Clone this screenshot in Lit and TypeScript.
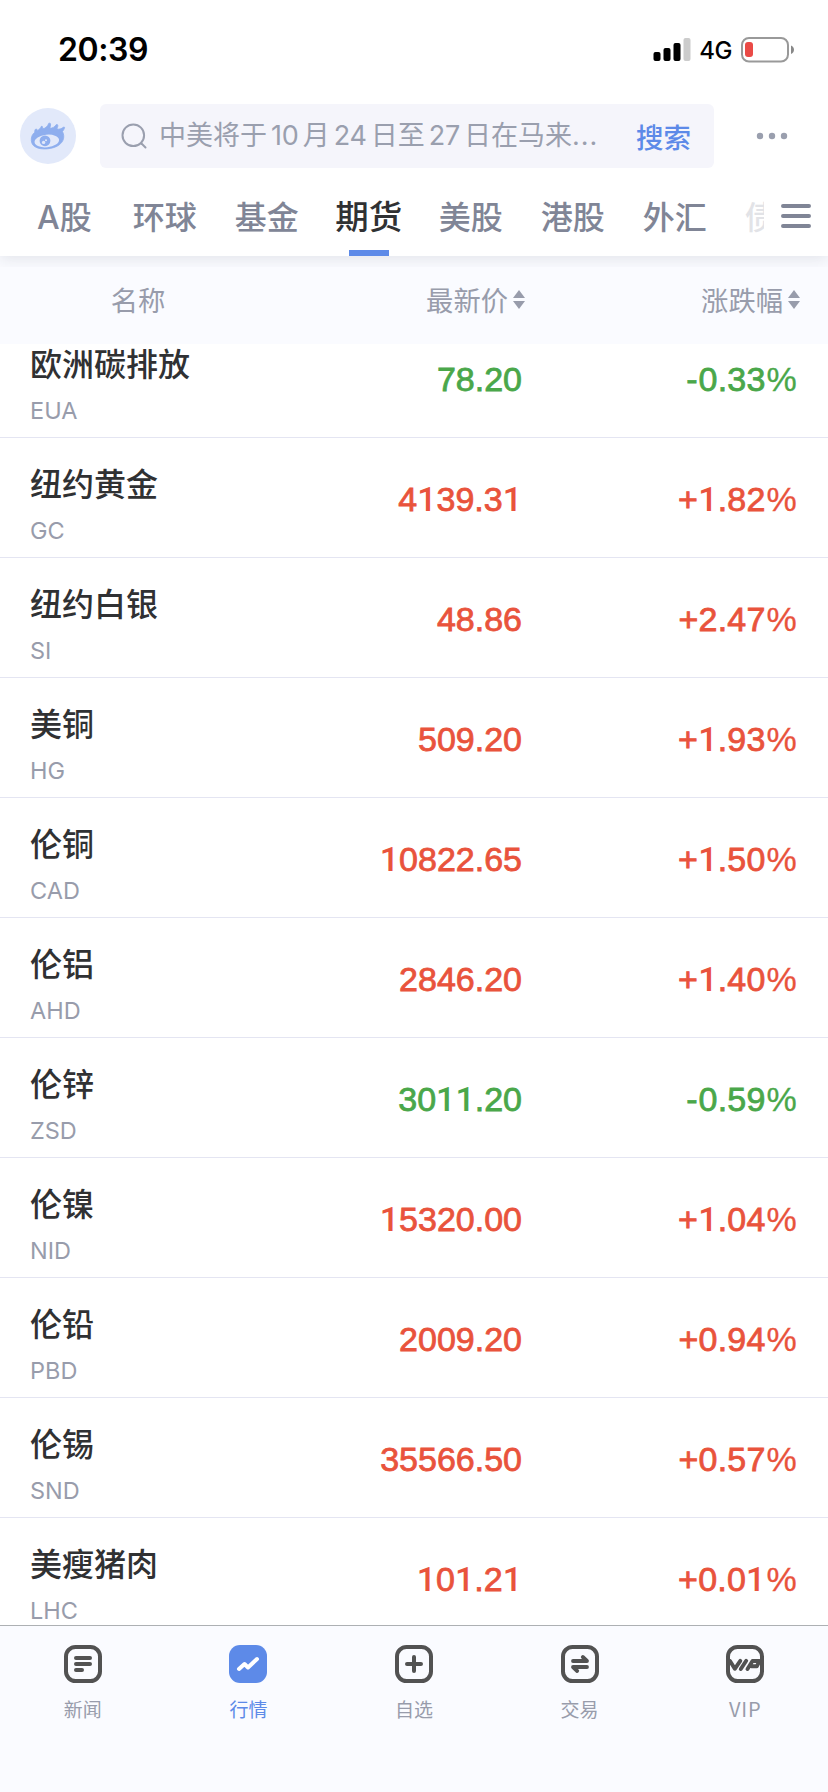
import { LitElement, html, css, svg } from "lit";
import { customElement } from "lit/decorators.js";
import { classMap } from "lit/directives/class-map.js";

type Quote = { name: string; code: string; price: string; change: string };

const QUOTES: Quote[] = [
  { name: "欧洲碳排放", code: "EUA", price: "78.20", change: "-0.33%" },
  { name: "纽约黄金", code: "GC", price: "4139.31", change: "+1.82%" },
  { name: "纽约白银", code: "SI", price: "48.86", change: "+2.47%" },
  { name: "美铜", code: "HG", price: "509.20", change: "+1.93%" },
  { name: "伦铜", code: "CAD", price: "10822.65", change: "+1.50%" },
  { name: "伦铝", code: "AHD", price: "2846.20", change: "+1.40%" },
  { name: "伦锌", code: "ZSD", price: "3011.20", change: "-0.59%" },
  { name: "伦镍", code: "NID", price: "15320.00", change: "+1.04%" },
  { name: "伦铅", code: "PBD", price: "2009.20", change: "+0.94%" },
  { name: "伦锡", code: "SND", price: "35566.50", change: "+0.57%" },
  { name: "美瘦猪肉", code: "LHC", price: "101.21", change: "+0.01%" },
];

const TABS = ["A股", "环球", "基金", "期货", "美股", "港股", "外汇", "债"];

const frame = svg`<rect x="2" y="2" width="34" height="34" rx="9.5" fill="none" stroke="#525252" stroke-width="4"/>`;

const NAV = [
  {
    label: "新闻",
    icon: svg`${frame}<path d="M12 13H26M12 19H26M12 25H18" stroke="#525252" stroke-width="4" stroke-linecap="round"/>`,
  },
  {
    label: "行情",
    active: true,
    icon: svg`<rect width="38" height="38" rx="11" fill="#5d8ae8"/><path d="M10 24L15.5 19L19 22.5L28 14" fill="none" stroke="#fff" stroke-width="4" stroke-linecap="round" stroke-linejoin="round"/>`,
  },
  {
    label: "自选",
    icon: svg`${frame}<path d="M12 19H26M19 12V26" stroke="#525252" stroke-width="4" stroke-linecap="round"/>`,
  },
  {
    label: "交易",
    icon: svg`${frame}<path d="M12 16H26L21.8 12M26 22H12L16.2 26" fill="none" stroke="#525252" stroke-width="3.8" stroke-linecap="round" stroke-linejoin="round"/>`,
  },
  {
    label: "VIP",
    icon: svg`${frame}<path d="M4 16L8.8 23.8L14.3 15.8M14.8 24L20.2 15.8M21.5 24L26.5 16H33.5L30.8 21.3H25.5" fill="none" stroke="#525252" stroke-width="3.9" stroke-linecap="round" stroke-linejoin="round"/>`,
  },
];

@customElement("status-bar")
class StatusBar extends LitElement {
  static styles = css`
    :host { display: flex; justify-content: space-between; height: 100px; box-sizing: border-box; padding: 0 33px 0 58px; }
    .time { font: 600 32px/100px Inter, sans-serif; letter-spacing: -0.4px; color: #000; }
    .right { display: flex; align-items: center; height: 100px; }
    .net { font: 500 24px/36px Inter, sans-serif; margin: 2px 9px 0 8px; color: #000; letter-spacing: -0.5px; }
    svg { display: block; }
  `;
  render() {
    return html`<div class="time">20:39</div>
      <div class="right">
        <svg width="38" height="24" viewBox="0 0 38 24">
          <rect x="0.5" y="14" width="7" height="9" rx="2" />
          <rect x="10.5" y="10" width="7" height="13" rx="2" />
          <rect x="20.5" y="5" width="7" height="18" rx="2" />
          <rect x="30.5" y="0" width="7" height="23" rx="2" fill="#ccc" />
        </svg>
        <span class="net">4G</span>
        <svg width="54" height="26" viewBox="0 0 54 26">
          <rect x="1" y="1" width="46" height="23.5" rx="7" fill="none" stroke="#999" stroke-width="2" />
          <rect x="4" y="5" width="8" height="15" rx="3" fill="#ea4a46" />
          <path d="M50 8.5C54 10 54 15.5 50 17Z" fill="#888" />
        </svg>
      </div>`;
  }
}

@customElement("search-header")
class SearchHeader extends LitElement {
  static styles = css`
    :host { display: flex; align-items: center; height: 72px; padding: 0 40px 0 20px; }
    .logo { width: 56px; height: 56px; margin-right: 24px; flex: none; }
    .box { display: flex; align-items: center; width: 614px; height: 64px; box-sizing: border-box; border-radius: 6px; background: #f5f5fb; padding: 0 23px 0 21px; }
    .hint { flex: 1; white-space: nowrap; margin-left: 12px; font: 400 27px/66px Inter, "Noto Sans CJK SC", sans-serif; color: #9a9fae; }
    .go { font: 500 27.5px/62px "Noto Sans CJK SC", sans-serif; color: #5d8ae8; }
    .more { margin-left: 42px; }
    svg { display: block; }
    .hint span { margin: 0 4px; letter-spacing: -0.2px; }
    .hint i { font-style: normal; letter-spacing: 0.9px; }
  `;
  render() {
    return html`<svg class="logo" viewBox="0 0 56 56">
        <circle cx="28" cy="28" r="28" fill="#e2e9fa" />
        <path
          fill="#8eaeee"
          stroke="#8eaeee"
          stroke-width="0.8"
          stroke-linejoin="round"
          d="M11.3 32.5C11 29 12.5 26 14.8 24.2C14.5 22.5 15.3 20.5 16.6 21C17.2 21.5 16.5 22.2 17.3 22.4C19.3 21.5 20.5 20.5 21.3 18.3C23 18 22.7 19.7 22.5 20.8C25.5 20.5 27.5 18.5 28.8 15.3C31 14.5 31 16.5 29.8 20.3C32.5 20.2 34.8 19 36.2 16.7C38 16 38.5 17.5 36.8 21C39.5 21.5 41.5 20.8 43.3 19.3C45 18.5 45.3 19.8 42.5 23.5C45 28.5 43.8 33.5 39 37C34 41 21.5 42.5 15.5 39C12.7 37.5 11.5 35.5 11.3 32.5Z"
        />
        <ellipse cx="26.8" cy="33" rx="12.3" ry="6.3" transform="rotate(-6 26.8 33)" fill="#e2e9fa" />
        <circle cx="25" cy="32.8" r="5.4" fill="#8eaeee" />
        <circle cx="23.6" cy="34.4" r="1.7" fill="#e2e9fa" />
        <circle cx="26" cy="32.2" r="1" fill="#e2e9fa" />
      </svg>
      <div class="box">
        <svg width="26" height="26" viewBox="0 0 26 26" fill="none" stroke="#9a9fae" stroke-width="2" stroke-linecap="round">
          <circle cx="12.3" cy="12.3" r="10.8" /><path d="M20.5 20.5L24.5 24.5" />
        </svg>
        <div class="hint">中美将于<span>10</span>月<span>24</span>日至<span>27</span>日在马来<i>...</i></div>
        <div class="go">搜索</div>
      </div>
      <svg class="more" width="32" height="8" fill="#9a9fae">
        <circle cx="4" cy="4" r="3.2" /><circle cx="16" cy="4" r="3.2" /><circle cx="28" cy="4" r="3.2" />
      </svg>`;
  }
}

@customElement("market-tabs")
class MarketTabs extends LitElement {
  static styles = css`
    :host { display: flex; height: 84px; background: #fff; box-shadow: 0 3px 14px rgba(40, 50, 60, 0.11); clip-path: inset(0 0 -11px 0); position: relative; z-index: 2; }
    .list { display: flex; width: 764px; box-sizing: border-box; padding-left: 37px; gap: 38px; overflow: hidden; }
    .tab { flex: none; font: 500 32px/84px Inter, "Noto Sans CJK SC", sans-serif; color: #808596; white-space: nowrap; height: 84px; display: flex; flex-direction: column; align-items: center; }
    .tab:first-child { margin-right: 3px; }
    .tab span { height: 78px; line-height: 91px; }
    .tab.active { color: #303133; font-size: 33.5px; margin: 0 -1.5px; }
    .bar { width: 40px; height: 6px; background: #5d8ae8; }
    .tab.fade { color: #e2e3e7; }
    .menu { display: block; margin: 31px 0 0 17px; }
  `;
  render() {
    return html`<div class="list">
        ${TABS.map(
          (t, i) => html`<div class=${classMap({ tab: true, active: i === 3, fade: i === 7 })}>
            <span>${t}</span>${i === 3 ? html`<div class="bar"></div>` : ""}
          </div>`
        )}
      </div>
      <svg class="menu" width="30" height="28" stroke="#808596" stroke-width="4" stroke-linecap="round">
        <path d="M2 3H28M2 13H28M2 23H28" />
      </svg>`;
  }
}

@customElement("quote-table")
class QuoteTable extends LitElement {
  static styles = css`
    :host { display: block; height: 1369px; overflow: hidden; background: #fff; }
    .head { display: grid; grid-template-columns: 276px 249px 303px; height: 88px; background: #fafbff; font: 400 27.3px/86px "Noto Sans CJK SC", sans-serif; color: #989cab; position: relative; z-index: 1; }
    .c { text-align: center; }
    .r { display: flex; justify-content: flex-end; align-items: center; gap: 5px; height: 86px; }
    .r:last-child { padding-right: 28px; }
    .rows { margin-top: -26px; }
    .row { display: grid; grid-template-columns: 276px 246px 306px; height: 120px; box-sizing: border-box; border-bottom: 1px solid #e4e5f2; }
    .id { padding: 22px 0 0 30px; }
    .name { font: 500 32px/44px "Noto Sans CJK SC", sans-serif; color: #303133; white-space: nowrap; }
    .code { font: 400 23.5px/32px Inter, sans-serif; color: #989cab; margin-top: 11px; }
    .num { font: 400 34px/123px "Liberation Sans", Arial, sans-serif; font-kerning: none; text-align: right; -webkit-text-stroke: 0.8px currentColor; color: #e9533c; }
    .num:last-child { padding-right: 31px; letter-spacing: 0.2px; }
    .one { font-family: Roboto, sans-serif; font-weight: 500; -webkit-text-stroke: 0; }
    .pct { -webkit-text-stroke: 0.3px currentColor; margin-left: 1px; }
    .minus { letter-spacing: 1px; }
    .down { color: #4aa74a; }
  `;
  /* A plain, footless 1 and a lighter percent sign sit among the bolder digits. */
  figures(text: string) {
    return text.split(/([1%-])/).map((p) => {
      if (p === "1") return html`<span class="one">1</span>`;
      if (p === "%") return html`<span class="pct">%</span>`;
      if (p === "-") return html`<span class="minus">-</span>`;
      return p;
    });
  }
  render() {
    const sort = html`<svg width="12" height="19" fill="#989cab"><path d="M0 8L6 0L12 8ZM0 11H12L6 19Z" /></svg>`;
    return html`<div class="head">
        <div class="c">名称</div>
        <div class="r">最新价${sort}</div>
        <div class="r">涨跌幅${sort}</div>
      </div>
      <div class="rows">
        ${QUOTES.map((q) => {
          const cls = classMap({ num: true, down: q.change.startsWith("-") });
          return html`<div class="row">
            <div class="id"><div class="name">${q.name}</div><div class="code">${q.code}</div></div>
            <div class=${cls}>${this.figures(q.price)}</div>
            <div class=${cls}>${this.figures(q.change)}</div>
          </div>`;
        })}
      </div>`;
  }
}

@customElement("nav-bar")
class NavBar extends LitElement {
  static styles = css`
    :host { display: grid; grid-template-columns: repeat(5, 1fr); height: 167px; box-sizing: border-box; background: #fafbff; border-top: 1px solid #adb0b3; }
    .item { display: flex; flex-direction: column; align-items: center; padding-top: 19px; font: 400 19px/28px "Noto Sans CJK SC", sans-serif; color: #989cab; }
    .item:last-child { font-size: 20px; letter-spacing: 0.8px; }
    .on { color: #5d8ae8; }
    svg { display: block; margin-bottom: 12px; }
  `;
  render() {
    return NAV.map(
      (n) => html`<div class=${classMap({ item: true, on: !!n.active })}>
        <svg width="38" height="38" viewBox="0 0 38 38">${n.icon}</svg>${n.label}
      </div>`
    );
  }
}

@customElement("app-root")
class AppRoot extends LitElement {
  static styles = css`
    :host { display: flex; flex-direction: column; width: 828px; height: 1792px; overflow: hidden; background: #fff; }
  `;
  render() {
    return html`<status-bar></status-bar><search-header></search-header><market-tabs></market-tabs><quote-table></quote-table><nav-bar></nav-bar>`;
  }
}
